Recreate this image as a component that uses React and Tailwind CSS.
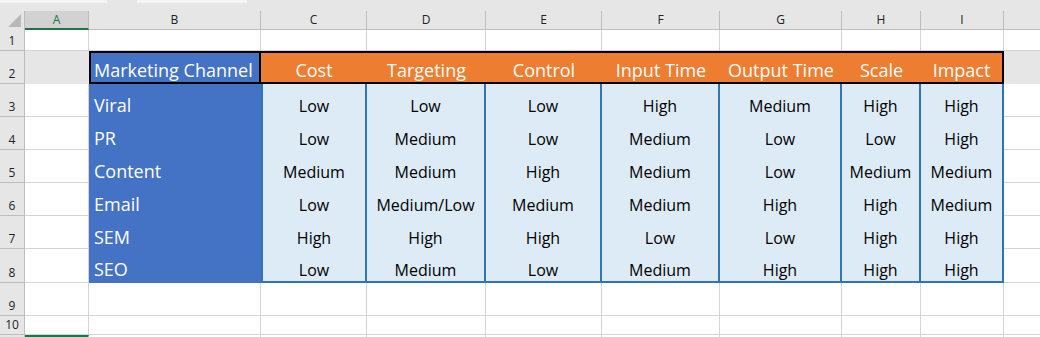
import React from 'react'

const COLS = [
  { key: 'A', w: 'w-[64px]' },
  { key: 'B', w: 'w-[172px]' },
  { key: 'C', w: 'w-[106px]' },
  { key: 'D', w: 'w-[119px]' },
  { key: 'E', w: 'w-[116px]' },
  { key: 'F', w: 'w-[118px]' },
  { key: 'G', w: 'w-[122px]' },
  { key: 'H', w: 'w-[79px]' },
  { key: 'I', w: 'w-[83px]' },
]

const HEADERS = ['Cost', 'Targeting', 'Control', 'Input Time', 'Output Time', 'Scale', 'Impact']

const CHANNELS = [
  ['Viral', 'Low', 'Low', 'Low', 'High', 'Medium', 'High', 'High'],
  ['PR', 'Low', 'Medium', 'Low', 'Medium', 'Low', 'Low', 'High'],
  ['Content', 'Medium', 'Medium', 'High', 'Medium', 'Low', 'Medium', 'Medium'],
  ['Email', 'Low', 'Medium/Low', 'Medium', 'Medium', 'High', 'High', 'Medium'],
  ['SEM', 'High', 'High', 'High', 'Low', 'Low', 'High', 'High'],
  ['SEO', 'Low', 'Medium', 'Low', 'Medium', 'High', 'High', 'High'],
]

const font = { fontFamily: '"Open Sans", "Noto Sans", sans-serif' }

function RowNum({ n }) {
  return (
    <div className="w-[25px] shrink-0 flex items-end justify-center pb-[1px] bg-[#e6e6e6] border-r border-b border-[#bdbdbd] text-[12px] leading-[16px] text-[#222]">
      {n}
    </div>
  )
}

function Blank({ w, gray }) {
  if (gray) return <div className={`${w} shrink-0 bg-[#e7e6e6]`} />
  return <div className={`${w} shrink-0 border-r border-b border-[#d4d4d4] bg-white`} />
}

function BlankRow({ n, h, selA }) {
  return (
    <div className={`flex shrink-0 ${h}`}>
      <RowNum n={n} />
      {COLS.map((c) =>
        selA && c.key === 'A' ? (
          <div key={c.key} className={`${c.w} shrink-0 border-t-2 border-[#217346] border-r border-r-[#d4d4d4]`} />
        ) : (
          <Blank key={c.key} w={c.w} />
        )
      )}
      <div className="flex-1 border-b border-[#d4d4d4] bg-white" />
    </div>
  )
}

export default function App() {
  return (
    <div className="w-[1040px] h-[337px] overflow-hidden bg-white flex flex-col" style={font}>
      {/* ribbon edge */}
      <div className="h-[11px] shrink-0 bg-[#e6e6e6] relative">
        <div className="absolute top-0 left-0 w-[107px] h-[3px] bg-[#f4f4f4]" />
        <div className="absolute top-0 left-[137px] w-[110px] h-[3px] bg-[#f4f4f4]" />
      </div>

      {/* column letters */}
      <div className="flex h-[19px] shrink-0 bg-[#e6e6e6] text-[12px] text-[#222]">
        <div className="w-[25px] shrink-0 border-r border-[#bdbdbd] relative">
          <div
            className="absolute right-[3px] bottom-[3px] w-[13px] h-[13px] bg-[#b8b8b8]"
            style={{ clipPath: 'polygon(100% 0, 100% 100%, 0 100%)' }}
          />
        </div>
        {COLS.map((c) =>
          c.key === 'A' ? (
            <div
              key={c.key}
              className={`${c.w} shrink-0 flex items-center justify-center bg-[#d2d2d2] text-[#217346] border-r border-[#bdbdbd] border-b-2 border-b-[#217346]`}
            >
              {c.key}
            </div>
          ) : (
            <div key={c.key} className={`${c.w} shrink-0 flex items-center justify-center border-r border-b border-[#bdbdbd]`}>
              {c.key}
            </div>
          )
        )}
        <div className="flex-1 border-b border-[#bdbdbd]" />
      </div>

      <BlankRow n={1} h="h-[21px]" />

      {/* header row */}
      <div className="flex h-[33px] shrink-0">
        <RowNum n={2} />
        <Blank w="w-[64px]" gray />
        <div className="w-[172px] shrink-0 flex items-end pl-[3px] bg-[#4472c4] border-2 border-black text-white text-[18px] leading-[24px]">
          Marketing Channel
        </div>
        {HEADERS.map((h, i) => (
          <div
            key={h}
            className={`${COLS[i + 2].w} shrink-0 flex items-end justify-center bg-[#ed7d31] border-y-2 border-black text-white text-[18px] leading-[24px] ${
              i === HEADERS.length - 1 ? 'border-r-2' : ''
            }`}
          >
            {h}
          </div>
        ))}
        <div className="flex-1 bg-[#e7e6e6]" />
      </div>

      {/* channel rows */}
      {CHANNELS.map((row, r) => {
        const last = r === CHANNELS.length - 1
        return (
          <div key={row[0]} className={`flex shrink-0 ${last ? 'h-[34px]' : 'h-[33px]'}`}>
            <RowNum n={r + 3} />
            <Blank w="w-[64px]" />
            <div
              className={`w-[172px] shrink-0 flex items-end pl-[5px] bg-[#4472c4] text-white text-[18px] leading-[24px] ${
                last ? 'pb-[2px]' : ''
              }`}
            >
              {row[0]}
            </div>
            {row.slice(1).map((v, i) => (
              <div
                key={i}
                className={`${COLS[i + 2].w} shrink-0 flex items-end justify-center bg-[#ddebf7] border-r-2 border-[#2e75b6] text-black text-[16px] leading-[22px] ${
                  i === 0 ? 'border-l-2' : ''
                } ${last ? 'border-b-2' : ''}`}
              >
                {v}
              </div>
            ))}
            <div className="flex-1 border-b border-[#d4d4d4] bg-white" />
          </div>
        )
      })}

      <BlankRow n={9} h="h-[33px]" />
      <BlankRow n={10} h="h-[19px]" />
      {/* row 11 peeks in below the fold; its number is out of view */}
      <BlankRow n="" h="h-[21px]" selA />
    </div>
  )
}
